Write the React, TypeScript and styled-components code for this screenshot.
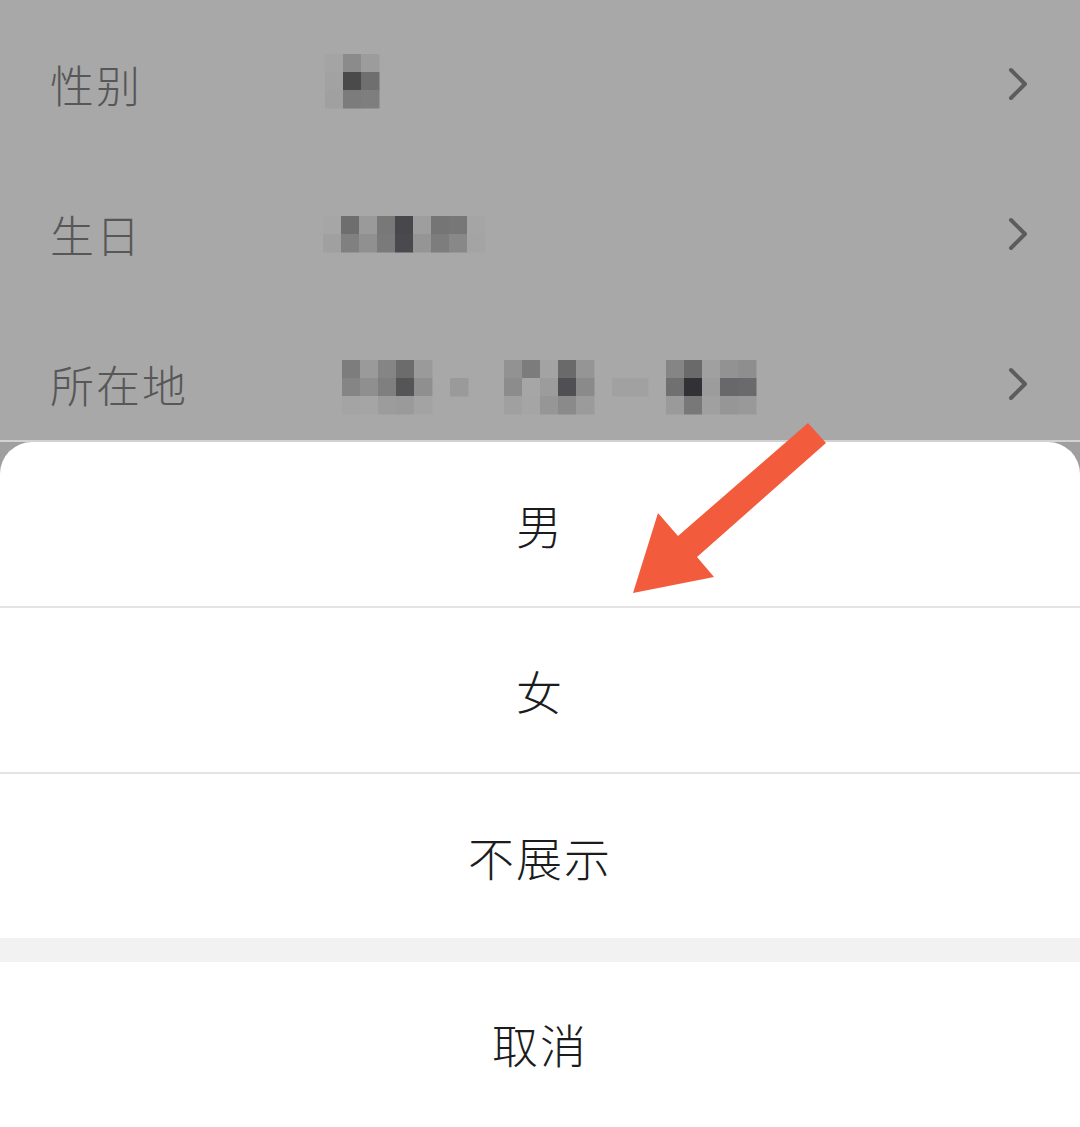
import React from 'react'
import styled, { createGlobalStyle } from 'styled-components'

const GlobalStyle = createGlobalStyle`
  html, body {
    margin: 0;
    padding: 0;
    background: #a8a8a8;
  }
  * {
    box-sizing: border-box;
  }
`

const Page = styled.div`
  position: relative;
  width: 1080px;
  height: 1127px;
  overflow: hidden;
  background: #a8a8a8;
  font-family: 'Noto Sans CJK SC', 'Noto Sans', sans-serif;
  font-weight: 300;
`

const List = styled.div`
  display: flex;
  flex-direction: column;
  padding-top: 9px;
`

const Row = styled.div`
  display: flex;
  align-items: center;
  height: 150px;
  padding: 0 50px 0 50px;
`

const Label = styled.div`
  width: 270px;
  font-size: 44px;
  letter-spacing: 2px;
  color: #575757;
  line-height: 1;
`

const Value = styled.div`
  flex: 1;
  display: flex;
  align-items: center;
`

const Chevron = () => (
  <svg width="24" height="40" viewBox="0 0 24 40">
    <path d="M5 6 L19 20 L5 34" fill="none" stroke="#5c5c5c" strokeWidth="4" strokeLinecap="round" strokeLinejoin="round" />
  </svg>
)

// cell: [x, y, color]; 18px squares, relative to the value column start (x=320)
type Cell = [number, number, string]

const grid = (x0: number, y0: number, rows: string[][]): Cell[] =>
  rows.flatMap((r, ri) => r.map((c, ci) => [x0 + ci * 18, y0 + ri * 18, c] as Cell))

const mosaics: Cell[][] = [
  grid(5, 10, [
    ['#a4a4a4', '#8b8b8b', '#9c9c9c'],
    ['#a2a2a2', '#4a4a4a', '#6f6f6f'],
    ['#a0a0a0', '#7c7c7c', '#7e7e7e'],
  ]),
  grid(3, 22, [
    ['#a6a6a6', '#6e6e6e', '#9a9a9a', '#787878', '#48484c', '#9e9e9e', '#757575', '#777777', '#a5a5a5'],
    ['#a0a0a0', '#808080', '#909090', '#7a7a7a', '#4a4a4e', '#959595', '#7d7d7d', '#888888', '#a4a4a4'],
  ]),
  [
    ...grid(22, 16, [
      ['#7d7d7d', '#9a9a9a', '#858585', '#6c6c6c', '#9a9a9a'],
      ['#858585', '#8f8f8f', '#7f7f7f', '#555558', '#8f8f8f'],
      ['#a4a4a4', '#a5a5a5', '#9c9c9c', '#9a9a9a', '#a3a3a3'],
    ]),
    [130, 34, '#9a9a9a'] as Cell,
    ...grid(184, 16, [
      ['#929292', '#7c7c7c', '#a3a3a3', '#6a6a6a', '#959595'],
      ['#8c8c8c', '#a6a6a6', '#9c9c9c', '#505054', '#8a8a8a'],
      ['#a0a0a0', '#a5a5a5', '#969696', '#8a8a8a', '#9b9b9b'],
    ]),
    [292, 34, '#a1a1a1'] as Cell,
    [310, 34, '#a1a1a1'] as Cell,
    ...grid(346, 16, [
      ['#858585', '#6a6a6a', '#a0a0a0', '#929292', '#8e8e8e'],
      ['#707070', '#323236', '#9c9c9c', '#68686a', '#6a6a6c'],
      ['#9a9a9a', '#787878', '#a0a0a0', '#969696', '#999999'],
    ]),
  ],
]

const Mosaic = ({ cells }: { cells: Cell[] }) => (
  <svg width="460" height="80" viewBox="0 0 460 80">
    {cells.map(([x, y, c], i) => (
      <rect key={i} x={x} y={y} width="18.5" height="18.5" fill={c} />
    ))}
  </svg>
)

const Backdrop = styled.div`
  position: absolute;
  left: 0;
  right: 0;
  top: 440px;
  bottom: 0;
  background: #9f9f9f;
  border-top: 2px solid #d2d2d2;
`

const Sheet = styled.div`
  height: 100%;
  background: #ffffff;
  border-radius: 32px 32px 0 0;
  display: flex;
  flex-direction: column;
`

const Option = styled.div<{ $last?: boolean }>`
  height: ${p => (p.$last ? 164 : 166)}px;
  display: flex;
  align-items: center;
  justify-content: center;
  border-bottom: ${p => (p.$last ? 'none' : '2px solid #e4e4e4')};
  font-size: 46px;
  letter-spacing: 2px;
  color: #1c1c1e;
`

const Gap = styled.div`
  height: 24px;
  background: #f2f2f2;
`

const Cancel = styled(Option)`
  flex: 1;
  height: auto;
  padding-bottom: 4px;
`

const ArrowLayer = styled.svg`
  position: absolute;
  left: 0;
  top: 0;
  pointer-events: none;
`

const rows = ['性别', '生日', '所在地']

export default function App() {
  return (
    <Page>
      <GlobalStyle />
      <List>
        {rows.map((r, i) => (
          <Row key={r}>
            <Label>{r}</Label>
            <Value>
              <Mosaic cells={mosaics[i]} />
            </Value>
            <Chevron />
          </Row>
        ))}
      </List>
      <Backdrop>
        <Sheet>
          <Option>男</Option>
          <Option>女</Option>
          <Option $last>不展示</Option>
          <Gap />
          <Cancel $last>取消</Cancel>
        </Sheet>
      </Backdrop>
      <ArrowLayer width="1080" height="1127" viewBox="0 0 1080 1127">
        <polygon
          points="808,423 826,443 697,557 714,577 633,593 658,513 678,536"
          fill="#f35b3d"
        />
      </ArrowLayer>
    </Page>
  )
}
